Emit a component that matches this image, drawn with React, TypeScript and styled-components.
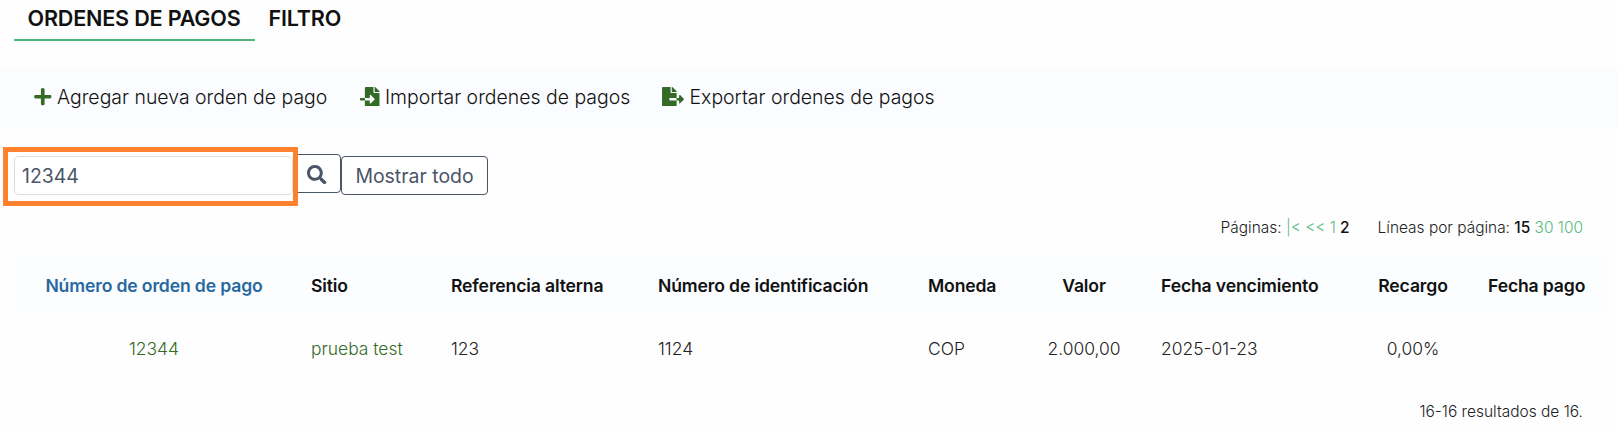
import React from "react";
import styled, { createGlobalStyle } from "styled-components";
import { FaFileExport, FaFileImport, FaPlus, FaSearch } from "react-icons/fa";

const GlobalStyle = createGlobalStyle`
  *, *::before, *::after { box-sizing: border-box; }
  body {
    margin: 0;
    background: #fefefe;
    color: #111;
    font-family: Inter, "Liberation Sans", sans-serif;
    font-weight: 300;
  }
`;

const Page = styled.main`
  display: flex;
  flex-direction: column;
  width: 100%;
  height: 432px;
  overflow: hidden;
`;

const Tabs = styled.nav`
  display: flex;
  height: 69px;
  padding-left: 14px;
`;

const Tab = styled.a<{ $active?: boolean; $width: number }>`
  width: ${(p) => p.$width}px;
  height: 41px;
  padding-left: 13.5px;
  border-bottom: 2px solid ${(p) => (p.$active ? "#4db380" : "transparent")};
  font-size: 21.6px;
  font-weight: 600;
  line-height: 37px;
  letter-spacing: -0.2px;
  white-space: nowrap;
`;

const Toolbar = styled.div`
  display: flex;
  align-items: center;
  height: 59px;
  padding: 0 0 4px 34px;
  background: #fbfcff;
`;

const Action = styled.a<{ $width: number; $icon: number }>`
  display: flex;
  align-items: center;
  gap: 5.5px;
  width: ${(p) => p.$width}px;
  font-size: 19.45px;
  line-height: 24px;
  white-space: nowrap;

  svg {
    flex: none;
    height: 19.5px;
    width: ${(p) => p.$icon}px;
    color: #336b26;
  }
`;

const SearchBar = styled.div`
  display: flex;
  align-items: center;
  height: 59px;
  margin-top: 19px;
  padding-left: 3px;
`;

const Highlight = styled.div`
  z-index: 1;
  display: flex;
  width: 295px;
  height: 59px;
  padding: 4px 0 0 6px;
  border: 5px solid #ff812e;
`;

const SearchInput = styled.input`
  width: 279px;
  height: 39px;
  padding: 0 7px;
  border: 1px solid #dcdfe2;
  border-radius: 5px;
  background: #fff;
  color: #4a5568;
  font: 400 19.45px Inter, "Liberation Sans", sans-serif;
  outline: none;
`;

const Button = styled.button<{ $width: number }>`
  display: flex;
  align-items: center;
  justify-content: center;
  width: ${(p) => p.$width}px;
  height: 39px;
  margin-bottom: 2px;
  padding: 0;
  border: 1px solid #4a5568;
  border-radius: 4px;
  background: #fff;
  color: #4a5568;
  font: 400 19.45px Inter, "Liberation Sans", sans-serif;
`;

const SearchButton = styled(Button)`
  margin: 0 0 6px -5px;
  padding-top: 2px;
  border-radius: 0 4px 4px 0;
`;

const Pager = styled.div`
  display: flex;
  justify-content: flex-end;
  gap: 28px;
  height: 48px;
  padding: 12px 34px 0 0;
  font-size: 15.45px;
  line-height: 20px;
  color: #222;
`;

const PageLink = styled.a`
  color: #56b97e;
`;

const Current = styled.span`
  color: #111;
  font-weight: 500;
`;

const Table = styled.table`
  width: 1598px;
  margin-left: 14px;
  table-layout: fixed;
  border-collapse: collapse;
`;

const Column = styled.col<{ $width: number }>`
  width: ${(p) => p.$width}px;
`;

const HeadRow = styled.tr`
  height: 62px;
  background: #fbfdff;
`;

const HeadCell = styled.th<{ $align?: string; $sorted?: boolean }>`
  padding: 2px 17px 0;
  color: ${(p) => (p.$sorted ? "#27699f" : "#111")};
  font-size: 17.6px;
  font-weight: 600;
  line-height: 22px;
  letter-spacing: -0.15px;
  text-align: ${(p) => p.$align ?? "left"};
  white-space: nowrap;
`;

const Cell = styled.td<{ $align?: string; $link?: boolean }>`
  height: 63px;
  padding: 2px 17px 0;
  color: ${(p) => (p.$link ? "#336b26" : "#222")};
  font-size: 17.45px;
  line-height: 22px;
  text-align: ${(p) => p.$align ?? "left"};
  white-space: nowrap;
`;

const Results = styled.footer`
  padding: 23px 34px 0 0;
  color: #222;
  font-size: 15.5px;
  line-height: 20px;
  text-align: right;
`;

type ColumnData = {
  title: string;
  value: string;
  width: number;
  align?: string;
  sorted?: boolean;
  link?: boolean;
};

const columns: ColumnData[] = [
  { title: "Número de orden de pago", value: "12344", width: 280, align: "center", sorted: true, link: true },
  { title: "Sitio", value: "prueba test", width: 140, link: true },
  { title: "Referencia alterna", value: "123", width: 207 },
  { title: "Número de identificación", value: "1124", width: 270 },
  { title: "Moneda", value: "COP", width: 113 },
  { title: "Valor", value: "2.000,00", width: 120, align: "center" },
  { title: "Fecha vencimiento", value: "2025-01-23", width: 211 },
  { title: "Recargo", value: "0,00%", width: 116, align: "center" },
  { title: "Fecha pago", value: "", width: 141 },
];

export default function App() {
  return (
    <Page>
      <GlobalStyle />
      <Tabs>
        <Tab $active $width={241}>ORDENES DE PAGOS</Tab>
        <Tab $width={100}>FILTRO</Tab>
      </Tabs>
      <Toolbar>
        <Action $width={326} $icon={17.5}><FaPlus />Agregar nueva orden de pago</Action>
        <Action $width={302} $icon={19.5}><FaFileImport />Importar ordenes de pagos</Action>
        <Action $width={300} $icon={22}><FaFileExport />Exportar ordenes de pagos</Action>
      </Toolbar>
      <SearchBar>
        <Highlight><SearchInput defaultValue="12344" /></Highlight>
        <SearchButton $width={48} aria-label="Buscar"><FaSearch /></SearchButton>
        <Button $width={147}>Mostrar todo</Button>
      </SearchBar>
      <Pager>
        <span>Páginas: <PageLink>|&lt;</PageLink> <PageLink>&lt;&lt;</PageLink> <PageLink>1</PageLink> <Current>2</Current></span>
        <span>Líneas por página: <Current>15</Current> <PageLink>30</PageLink> <PageLink>100</PageLink></span>
      </Pager>
      <Table>
        <colgroup>
          {columns.map((c) => <Column key={c.title} $width={c.width} />)}
        </colgroup>
        <thead>
          <HeadRow>
            {columns.map((c) => <HeadCell key={c.title} $align={c.align} $sorted={c.sorted}>{c.title}</HeadCell>)}
          </HeadRow>
        </thead>
        <tbody>
          <tr>
            {columns.map((c) => <Cell key={c.title} $align={c.align} $link={c.link}>{c.value}</Cell>)}
          </tr>
        </tbody>
      </Table>
      <Results>16-16 resultados de 16.</Results>
    </Page>
  );
}
